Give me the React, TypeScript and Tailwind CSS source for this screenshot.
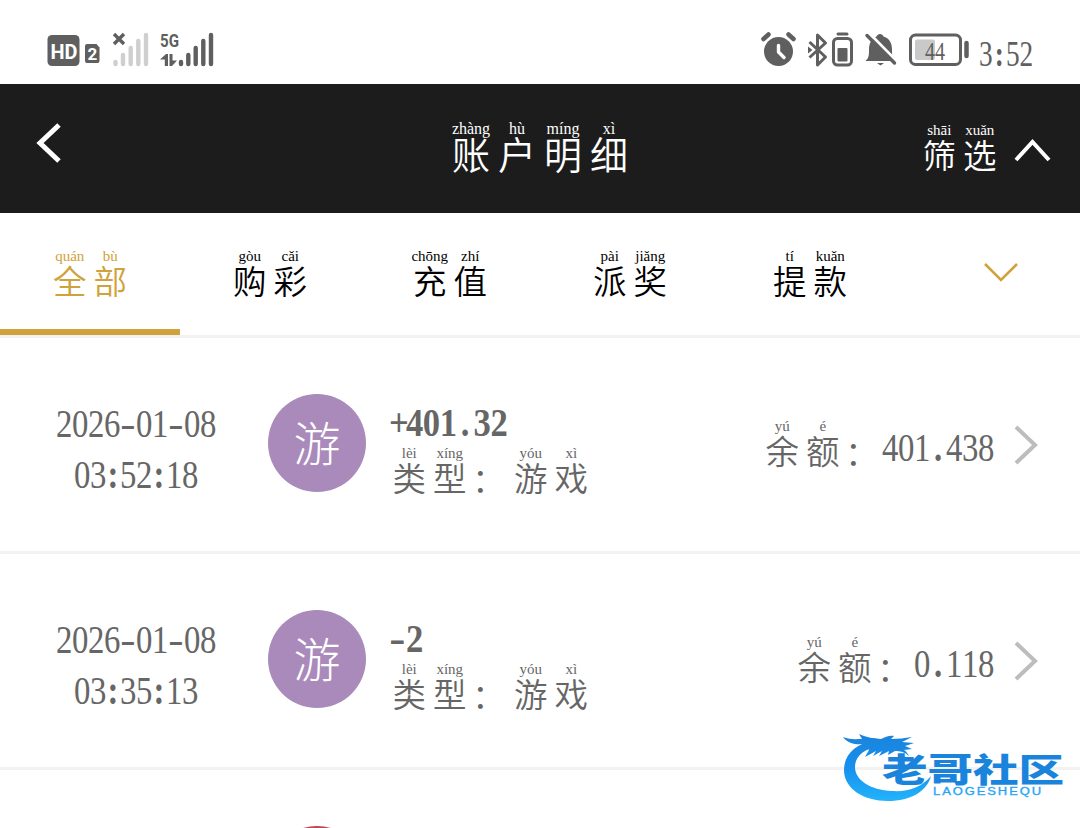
import clsx from 'clsx'

type Syllable = [string, string]

type Entry = {
  date: string
  time: string
  amount: string
  balance: string
}

const tabs: Syllable[][] = [
  [['全', 'quán'], ['部', 'bù']],
  [['购', 'gòu'], ['彩', 'cǎi']],
  [['充', 'chōng'], ['值', 'zhí']],
  [['派', 'pài'], ['奖', 'jiǎng']],
  [['提', 'tí'], ['款', 'kuǎn']],
]

const entries: Entry[] = [
  { date: '2026-01-08', time: '03:52:18', amount: '+401.32', balance: '401.438' },
  { date: '2026-01-08', time: '03:35:13', amount: '-2', balance: '0.118' },
]

// Hanzi with the pinyin set above each character
function Pinyin({ text, large }: { text: Syllable[]; large?: boolean }) {
  return (
    <span className="flex">
      {text.map(([hanzi, pinyin]) => (
        <span key={hanzi} className={clsx('flex flex-col items-center', large ? 'w-[46px]' : 'w-[40.5px]')}>
          <span
            className={clsx(
              "h-4 whitespace-nowrap font-['Liberation_Serif','Noto_Sans_CJK_SC',serif] leading-[15px]",
              large ? 'text-[16px]' : 'text-[15px]',
            )}
          >
            {pinyin}
          </span>
          <span className={large ? 'text-[38px] leading-[38px]' : 'text-[33.5px] leading-[35px]'}>{hanzi}</span>
        </span>
      ))}
    </span>
  )
}

// Narrow fixed-width figures
function Figures({ value, bold }: { value: string; bold?: boolean }) {
  const scale = bold ? 0.845 : 0.8
  const chars = value.split('')
  const width = chars.reduce((sum, c) => sum + (c === ':' ? 17.5 : 20), 0) * scale
  return (
    <span className="block" style={{ width }}>
      <span
        className={clsx(
          "flex w-max origin-left font-['Liberation_Serif',serif] text-[41px] leading-[51px]",
          bold ? 'scale-x-[0.845] font-bold' : 'scale-x-[0.8] font-normal',
        )}
      >
        {chars.map((c, i) => (
          <span
            key={i}
            className={clsx('text-center', c === ':' ? 'w-[17.5px]' : 'w-5', (c === ':' || c === '.') && 'font-bold')}
          >
            {c === '-' ? <span className="inline-block scale-x-[1.4]">{c}</span> : c}
          </span>
        ))}
      </span>
    </span>
  )
}

function StatusBar() {
  return (
    <div className="flex h-[84px] items-start justify-between text-[#5f5f5f]">
      <svg width="230" height="84" viewBox="0 0 230 84" fill="currentColor">
        <rect x="47.500" y="35" width="32" height="31" rx="4.500" />
        <text x="50.500" y="58.500" fill="#fff" fontFamily="Roboto, sans-serif" fontWeight="700" fontSize="21" textLength="27" lengthAdjust="spacingAndGlyphs">HD</text>
        <path d="M87 44h9.500l3 3.500V61a2 2 0 0 1-2 2H87a2 2 0 0 1-2-2V46a2 2 0 0 1 2-2z" />
        <text x="87.500" y="60" fill="#fff" fontFamily="Roboto, sans-serif" fontWeight="700" fontSize="17">2</text>
        <path d="m114 34 10 10m0-10-10 10" stroke="currentColor" strokeWidth="3.400" />
        <g stroke="#cfcfcf" strokeWidth="4.400" strokeLinecap="round">
          <path d="M115.500 62v2M123 55v9M130.700 48v16M138.300 41v23M146 35v29" />
        </g>
        <text x="160" y="47" fontFamily="Roboto, sans-serif" fontWeight="700" fontSize="19" textLength="19" lengthAdjust="spacingAndGlyphs">5G</text>
        <path d="m160 59.500 6-5.500h2v12h-3.200v-6.500zM169.500 54h3v6.500h4.500l-5 5.500h-2.500z" />
        <g stroke="currentColor" strokeWidth="4.400" strokeLinecap="round">
          <path d="M181 62v2M188.300 55v9M195.700 48v16M203.300 41v23M211 35v29" />
        </g>
      </svg>
      <div className="flex">
        <svg width="219" height="84" viewBox="758 0 219 84" fill="none" stroke="currentColor">
          <circle cx="778.500" cy="51.500" r="14.500" fill="currentColor" stroke="none" />
          <path d="m763.500 39 5-4.500M793.500 39l-5-4.500" strokeWidth="4.500" strokeLinecap="round" />
          <path d="M778.500 45.500v6.500l5.500 5.500" stroke="#fff" strokeWidth="3.400" strokeLinecap="round" strokeLinejoin="round" />
          <path d="m809.500 42 16 15-8 8V35l8 8-16 14.500" strokeWidth="3" strokeLinejoin="round" />
          <path d="m808 46.500 4.500 3.500-4.500 3.500z" fill="currentColor" stroke="none" />
          <rect x="833.500" y="38.500" width="18" height="26.500" rx="4" strokeWidth="3" />
          <path d="M838 34h9" strokeWidth="3" strokeLinecap="round" />
          <rect x="837.500" y="48" width="10" height="13.500" rx="1" fill="currentColor" stroke="none" />
          <path d="M865.500 61c3.500-3 3.500-6 3.500-11.500 0-8 4-11.500 7.500-13 1-3.500 6-3.500 7 0 5 1.500 8.500 5.500 8.500 13 0 5.500 0 8.500 3.500 11.500z" fill="currentColor" stroke="none" />
          <path d="m869.500 33.500 28 28.500" stroke="#fff" strokeWidth="3" />
          <path d="m867 35.500 27.500 27.500" strokeWidth="3.400" strokeLinecap="round" />
          <path d="M877 63h7l-3.500 2.500z" fill="currentColor" stroke="none" />
          <rect x="910.500" y="35" width="50" height="29.500" rx="5" strokeWidth="3" />
          <rect x="915" y="39.500" width="20" height="20.500" rx="2" fill="#c9c9c9" stroke="none" />
          <path d="M966.500 43v13" strokeWidth="4.500" strokeLinecap="round" />
          <text x="925" y="60" fill="currentColor" stroke="none" fontFamily="Liberation Serif, serif" fontWeight="400" fontSize="26" textLength="20" lengthAdjust="spacingAndGlyphs">44</text>
        </svg>
        <span className="mt-[35px] w-[103px] pl-0.5 font-['Liberation_Serif',serif] text-[35px] leading-[40px] font-normal">
          <span className="inline-flex w-max origin-left scale-x-[0.78]">
            <span>3</span>
            <span className="w-[17px] text-center font-bold">:</span>
            <span>52</span>
          </span>
        </span>
      </div>
    </div>
  )
}

function Row({ entry }: { entry: Entry }) {
  return (
    <div className="flex h-[216px] border-b-[3px] border-[#f2f2f2] text-[#666]">
      <div className="flex w-[268px] flex-col items-center pt-[60px] pl-1">
        <Figures value={entry.date} />
        <Figures value={entry.time} />
      </div>
      <div className="mt-14 flex size-[98px] shrink-0 items-center justify-center rounded-full bg-[#a98abb] pt-0.5 text-[47px] leading-none font-light text-white">
        游
      </div>
      <div className="ml-[23px] pt-[59px]">
        <Figures value={entry.amount} bold />
        <div className="-mt-[2px] flex">
          <Pinyin text={[['类', 'lèi'], ['型', 'xíng']]} />
          <span className="w-[40.5px] pt-4 pl-0.5 text-[33.5px] leading-[37px]">：</span>
          <Pinyin text={[['游', 'yóu'], ['戏', 'xì']]} />
        </div>
      </div>
      <div className="ml-auto flex items-start pt-[81px]">
        <Pinyin text={[['余', 'yú'], ['额', 'é']]} />
        <span className="w-[39px] pt-4 pl-0.5 text-[33.5px] leading-[37px]">：</span>
        <div className="pt-[3px]">
          <Figures value={entry.balance} />
        </div>
      </div>
      <svg className="mt-[87px] mr-[41px] ml-[19px] shrink-0" width="26" height="40" viewBox="0 0 26 40" fill="none">
        <path d="m3 2 19 18L3 38" stroke="#bdbdbd" strokeWidth="4" />
      </svg>
    </div>
  )
}

function Watermark() {
  return (
    <svg className="absolute top-[728px] left-[838px]" width="230" height="80" viewBox="838 728 230 80">
      <defs>
        <linearGradient id="blue" gradientUnits="userSpaceOnUse" x1="0" y1="736" x2="0" y2="800">
          <stop offset="0" stopColor="#1a84dc" />
          <stop offset="0.5" stopColor="#1690ee" />
          <stop offset="1" stopColor="#24b2fb" />
        </linearGradient>
      </defs>
      <g fill="url(#blue)">
        <path d="M873 741c-18 3-29 14-29 29 0 19 20 31 44 31 23 0 39-10 43-25-9 11-22 16-39 15-22-1-37-11-37-24 0-11 9-18 24-21z" />
        <path d="M843 737c7 3 14 2 19 2l-3-5c8 4 15 4 22 5 5-2 8-4 13-3l-3 3c7 0 14-1 21-2l-10 5 12 1-9 3 7 3-8 1c2 1 4 4 5 6-4-4-9-5-14-5l-7 4 1-4-10 5 3-5-9 5 3-5-11 6 4-7-5-6c-7 1-16 0-21-7z" />
        <text transform="translate(882 782) scale(1.38 1)" fontFamily="Liberation Sans, Noto Sans CJK SC, sans-serif" fontWeight="900" fontSize="33">老哥社区</text>
        <text x="933" y="794.500" fontFamily="Liberation Sans, sans-serif" fontWeight="400" fontSize="10" textLength="110" lengthAdjust="spacingAndGlyphs" letterSpacing="1.500" stroke="#24a0f5" strokeWidth="0.300">LAOGESHEQU</text>
      </g>
    </svg>
  )
}

export default function App() {
  return (
    <div className="relative h-[828px] w-[1080px] overflow-hidden bg-white font-['Liberation_Sans','Noto_Sans_CJK_SC',sans-serif] font-[350]">
      <StatusBar />
      <header className="flex h-[129px] bg-[#1c1c1c] text-white">
        <div className="w-[448px] pt-[38px] pl-[35px]">
          <svg width="28" height="42" viewBox="0 0 28 42" fill="none">
            <path d="M24 3 5 21l19 18" stroke="currentColor" strokeWidth="5" />
          </svg>
        </div>
        <h1 className="pt-[37px]">
          <Pinyin large text={[['账', 'zhàng'], ['户', 'hù'], ['明', 'míng'], ['细', 'xì']]} />
        </h1>
        <button className="ml-auto flex pt-[39px] pr-7">
          <Pinyin text={[['筛', 'shāi'], ['选', 'xuǎn']]} />
          <svg className="mt-[14px] ml-3" width="40" height="28" viewBox="0 0 40 28" fill="none">
            <path d="M4 23 20.500 5 37 23" stroke="currentColor" strokeWidth="4" />
          </svg>
        </button>
      </header>
      <nav className="flex h-[125px] border-b-[3px] border-[#f2f2f2]">
        {tabs.map((tab, i) => (
          <button
            key={i}
            className={clsx(
              'flex h-[122px] w-[180px] justify-center border-b-[6px] pt-9',
              i === 0 ? 'border-[#d0a23b] text-[#d0a23b]' : 'border-transparent text-black',
            )}
          >
            <Pinyin text={tab} />
          </button>
        ))}
        <svg className="mt-12 ml-[82px]" width="38" height="26" viewBox="0 0 38 26" fill="none">
          <path d="m3 3 16 16L35 3" stroke="#d0a23b" strokeWidth="2.500" />
        </svg>
      </nav>
      <main>
        {entries.map((entry) => (
          <Row key={entry.time} entry={entry} />
        ))}
        <div className="mt-14 ml-[268px] size-[98px] rounded-full bg-[#c0474d]" />
      </main>
      <Watermark />
    </div>
  )
}
